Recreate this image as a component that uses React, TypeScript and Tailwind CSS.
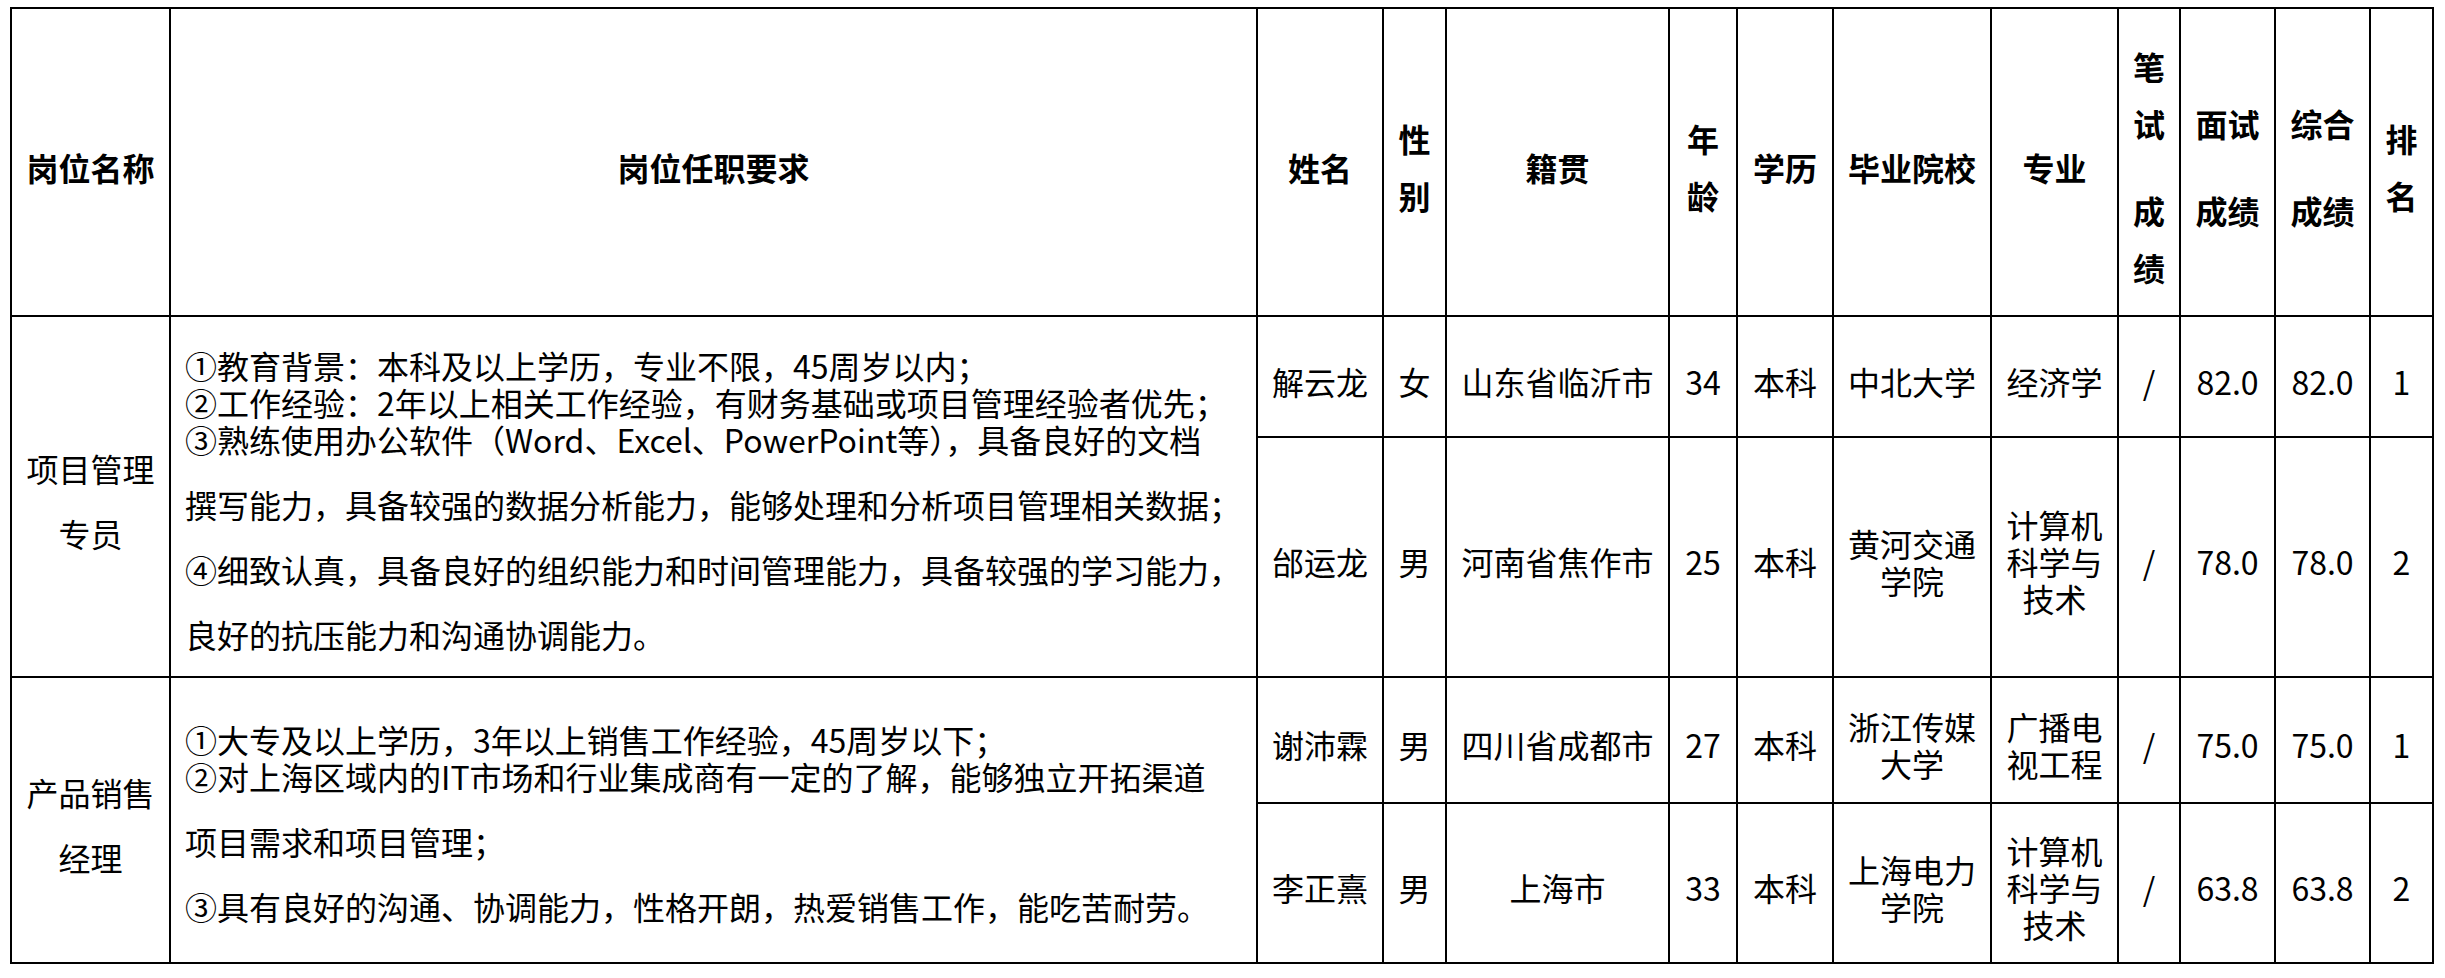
type Line = { text: string; gap?: boolean };

const headers: string[][][] = [
  [['岗位名称']],
  [['岗位任职要求']],
  [['姓名']],
  [['性', '别']],
  [['籍贯']],
  [['年', '龄']],
  [['学历']],
  [['毕业院校']],
  [['专业']],
  [['笔', '试'], ['成', '绩']],
  [['面试'], ['成绩']],
  [['综合'], ['成绩']],
  [['排', '名']],
];

type Person = {
  name: string;
  sex: string;
  origin: string;
  age: string;
  edu: string;
  school: string[];
  major: string[];
  written: string;
  interview: string;
  total: string;
  rank: string;
};

const groups: { title: string[]; req: Line[]; people: Person[] }[] = [
  {
    title: ['项目管理', '专员'],
    req: [
      { text: '①教育背景：本科及以上学历，专业不限，45周岁以内；' },
      { text: '②工作经验：2年以上相关工作经验，有财务基础或项目管理经验者优先；' },
      { text: '③熟练使用办公软件（Word、Excel、PowerPoint等），具备良好的文档' },
      { text: '撰写能力，具备较强的数据分析能力，能够处理和分析项目管理相关数据；', gap: true },
      { text: '④细致认真，具备良好的组织能力和时间管理能力，具备较强的学习能力，', gap: true },
      { text: '良好的抗压能力和沟通协调能力。', gap: true },
    ],
    people: [
      { name: '解云龙', sex: '女', origin: '山东省临沂市', age: '34', edu: '本科', school: ['中北大学'], major: ['经济学'], written: '/', interview: '82.0', total: '82.0', rank: '1' },
      { name: '邰运龙', sex: '男', origin: '河南省焦作市', age: '25', edu: '本科', school: ['黄河交通', '学院'], major: ['计算机', '科学与', '技术'], written: '/', interview: '78.0', total: '78.0', rank: '2' },
    ],
  },
  {
    title: ['产品销售', '经理'],
    req: [
      { text: '①大专及以上学历，3年以上销售工作经验，45周岁以下；' },
      { text: '②对上海区域内的IT市场和行业集成商有一定的了解，能够独立开拓渠道' },
      { text: '项目需求和项目管理；', gap: true },
      { text: '③具有良好的沟通、协调能力，性格开朗，热爱销售工作，能吃苦耐劳。', gap: true },
    ],
    people: [
      { name: '谢沛霖', sex: '男', origin: '四川省成都市', age: '27', edu: '本科', school: ['浙江传媒', '大学'], major: ['广播电', '视工程'], written: '/', interview: '75.0', total: '75.0', rank: '1' },
      { name: '李正熹', sex: '男', origin: '上海市', age: '33', edu: '本科', school: ['上海电力', '学院'], major: ['计算机', '科学与', '技术'], written: '/', interview: '63.8', total: '63.8', rank: '2' },
    ],
  },
];

function HeadCell({ paras }: { paras: string[][] }) {
  return (
    <div className="bg-white flex flex-col items-center justify-center pt-[10px] font-bold">
      {paras.map((lines, i) => (
        <div key={i} className={i > 0 ? 'mt-[30px]' : ''}>
          {lines.map((l) => (
            <div key={l} className="leading-[57px] whitespace-nowrap text-center">{l}</div>
          ))}
        </div>
      ))}
    </div>
  );
}

function Cell({ lines }: { lines: string[] }) {
  return (
    <div className="bg-white flex flex-col items-center justify-center pt-[9px]">
      {lines.map((l) => (
        <div key={l} className="leading-[37px] whitespace-nowrap text-center">{l}</div>
      ))}
    </div>
  );
}

export default function App() {
  return (
    <div lang="zh-CN" className="min-h-screen bg-white pt-[7px] pl-[10px] text-[32px] text-black [font-family:'Noto_Sans_CJK_SC','Noto_Sans',sans-serif]">
      <div className="w-fit bg-black p-[2px] grid gap-[2px] grid-cols-[157px_1085px_124px_61px_221px_66px_94px_156px_125px_60px_93px_93px_61px] grid-rows-[306px_119px_238px_124px_158px]">
        {headers.map((h, i) => (
          <HeadCell key={i} paras={h} />
        ))}

        {groups.map((g) => [
          <div key={g.title[0] + 't'} className="row-span-2 bg-white flex flex-col items-center justify-center pt-[9px]">
            {g.title.map((t) => (
              <div key={t} className="leading-[65px] whitespace-nowrap">{t}</div>
            ))}
          </div>,
          <div key={g.title[0] + 'r'} className="row-span-2 bg-white flex flex-col justify-center pl-[14px] pt-[6px]">
            {g.req.map((l) => (
              <div key={l.text} className={'leading-[37px] whitespace-nowrap ' + (l.gap ? 'mt-[28px]' : '')}>
                {l.text}
              </div>
            ))}
          </div>,
          ...g.people.map((p) => [
            <Cell key={p.name + 'n'} lines={[p.name]} />,
            <Cell key={p.name + 's'} lines={[p.sex]} />,
            <Cell key={p.name + 'o'} lines={[p.origin]} />,
            <Cell key={p.name + 'a'} lines={[p.age]} />,
            <Cell key={p.name + 'e'} lines={[p.edu]} />,
            <Cell key={p.name + 'c'} lines={p.school} />,
            <Cell key={p.name + 'm'} lines={p.major} />,
            <Cell key={p.name + 'w'} lines={[p.written]} />,
            <Cell key={p.name + 'i'} lines={[p.interview]} />,
            <Cell key={p.name + 'z'} lines={[p.total]} />,
            <Cell key={p.name + 'k'} lines={[p.rank]} />,
          ]),
        ])}
      </div>
    </div>
  );
}
